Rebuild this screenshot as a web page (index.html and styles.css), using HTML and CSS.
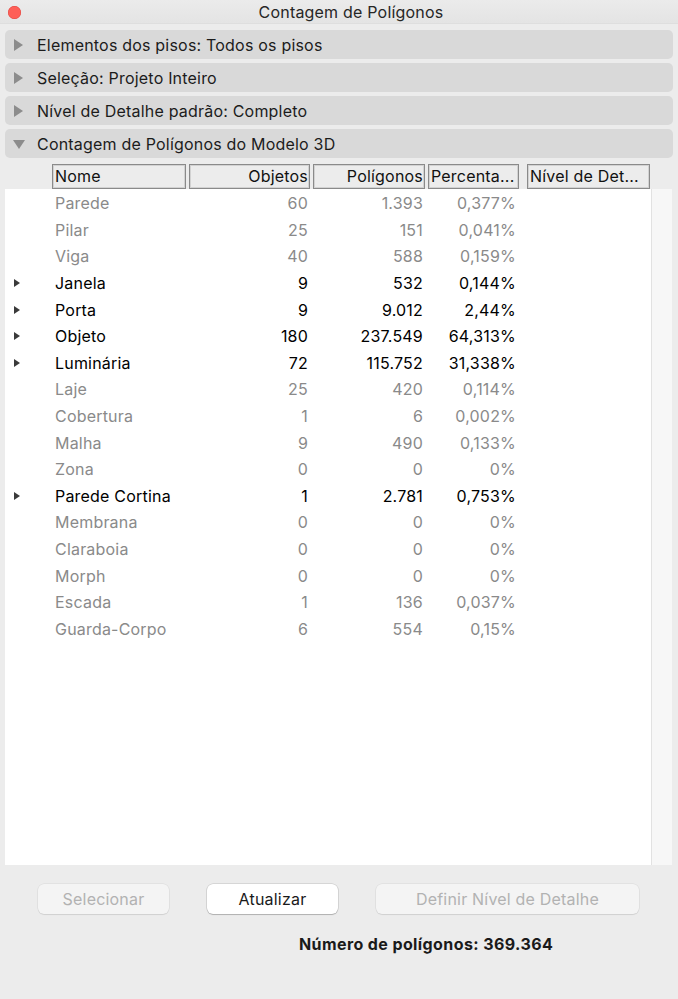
FILE: index.html
```html
<!DOCTYPE html>
<html lang="pt">
<head>
<meta charset="utf-8">
<title>Contagem de Polígonos</title>
<link rel="stylesheet" href="styles.css">
</head>
<body>
<div class="window">
  <div class="titlebar">
    <span class="close"></span>
    <span class="title">Contagem de Polígonos</span>
  </div>

  <div class="sections">
    <div class="bar"><span class="tri-right"></span><span>Elementos dos pisos: Todos os pisos</span></div>
    <div class="bar"><span class="tri-right"></span><span>Seleção: Projeto Inteiro</span></div>
    <div class="bar"><span class="tri-right"></span><span>Nível de Detalhe padrão: Completo</span></div>
    <div class="bar"><span class="tri-down"></span><span>Contagem de Polígonos do Modelo 3D</span></div>
  </div>

  <div class="table">
    <div class="thead">
      <div class="th left">Nome</div>
      <div class="th right">Objetos</div>
      <div class="th right">Polígonos</div>
      <div class="th left">Percenta...</div>
      <div class="th left last">Nível de Det...</div>
    </div>
    <div class="tbody">
      <div class="list">
        <div class="row dim"><span></span><span class="name">Parede</span><span class="num">60</span><span class="num">1.393</span><span class="pct">0,377%</span></div>
        <div class="row dim"><span></span><span class="name">Pilar</span><span class="num">25</span><span class="num">151</span><span class="pct">0,041%</span></div>
        <div class="row dim"><span></span><span class="name">Viga</span><span class="num">40</span><span class="num">588</span><span class="pct">0,159%</span></div>
        <div class="row"><span class="disc"></span><span class="name">Janela</span><span class="num">9</span><span class="num">532</span><span class="pct">0,144%</span></div>
        <div class="row"><span class="disc"></span><span class="name">Porta</span><span class="num">9</span><span class="num">9.012</span><span class="pct">2,44%</span></div>
        <div class="row"><span class="disc"></span><span class="name">Objeto</span><span class="num">180</span><span class="num">237.549</span><span class="pct">64,313%</span></div>
        <div class="row"><span class="disc"></span><span class="name">Luminária</span><span class="num">72</span><span class="num">115.752</span><span class="pct">31,338%</span></div>
        <div class="row dim"><span></span><span class="name">Laje</span><span class="num">25</span><span class="num">420</span><span class="pct">0,114%</span></div>
        <div class="row dim"><span></span><span class="name">Cobertura</span><span class="num">1</span><span class="num">6</span><span class="pct">0,002%</span></div>
        <div class="row dim"><span></span><span class="name">Malha</span><span class="num">9</span><span class="num">490</span><span class="pct">0,133%</span></div>
        <div class="row dim"><span></span><span class="name">Zona</span><span class="num">0</span><span class="num">0</span><span class="pct">0%</span></div>
        <div class="row"><span class="disc"></span><span class="name">Parede Cortina</span><span class="num">1</span><span class="num">2.781</span><span class="pct">0,753%</span></div>
        <div class="row dim"><span></span><span class="name">Membrana</span><span class="num">0</span><span class="num">0</span><span class="pct">0%</span></div>
        <div class="row dim"><span></span><span class="name">Claraboia</span><span class="num">0</span><span class="num">0</span><span class="pct">0%</span></div>
        <div class="row dim"><span></span><span class="name">Morph</span><span class="num">0</span><span class="num">0</span><span class="pct">0%</span></div>
        <div class="row dim"><span></span><span class="name">Escada</span><span class="num">1</span><span class="num">136</span><span class="pct">0,037%</span></div>
        <div class="row dim"><span></span><span class="name">Guarda-Corpo</span><span class="num">6</span><span class="num">554</span><span class="pct">0,15%</span></div>
      </div>
      <div class="scroll"></div>
    </div>
  </div>

  <div class="buttons">
    <button class="btn disabled b1">Selecionar</button>
    <button class="btn b2">Atualizar</button>
    <button class="btn disabled b3">Definir Nível de Detalhe</button>
  </div>

  <div class="total">Número de polígonos: 369.364</div>
</div>
</body>
</html>
```

FILE: styles.css
```css
* { box-sizing: border-box; }
html, body { margin: 0; padding: 0; }
body {
  width: 678px;
  height: 999px;
  background: #ececec;
  font-family: "Inter", "Liberation Sans", sans-serif;
  font-size: 16px;
  letter-spacing: 0.2px;
  color: #1a1a1a;
  overflow: hidden;
}
.window {
  display: flex;
  flex-direction: column;
  height: 999px;
  background: #ececec;
}
.titlebar {
  height: 24px;
  flex: none;
  display: flex;
  align-items: center;
  justify-content: center;
  position: relative;
  padding-left: 24px;
  background: linear-gradient(#ebebeb, #e4e4e4);
  border-bottom: 1px solid #dedede;
}
.close {
  position: absolute;
  left: 8px;
  top: 6px;
  width: 13px;
  height: 13px;
  border-radius: 50%;
  background: #fe5f57;
  box-shadow: inset 0 0 0 0.5px #e0443e;
}
.title {
  color: #262626;
}
.sections {
  display: flex;
  flex-direction: column;
  gap: 4px;
  padding: 6px 5px 0 5px;
}
.bar {
  height: 29px;
  border-radius: 5px;
  background: #d9d9d9;
  display: flex;
  align-items: center;
  padding-left: 9px;
  gap: 14px;
  color: #1c1c1c;
}
.tri-right {
  width: 0;
  height: 0;
  border-top: 6px solid transparent;
  border-bottom: 6px solid transparent;
  border-left: 9px solid #8c8c8c;
}
.tri-down {
  width: 0;
  height: 0;
  border-left: 6px solid transparent;
  border-right: 6px solid transparent;
  border-top: 9px solid #8c8c8c;
  margin-left: -1px;
  margin-right: -2px;
  margin-top: 1px;
}
.table {
  margin: 6px 6px 0 5px;
  display: flex;
  flex-direction: column;
}
.thead {
  display: grid;
  grid-template-columns: 134px 121px 112px 91px 128px;
  column-gap: 3px;
  padding-left: 47px;
  height: 25px;
}
.th {
  height: 25px;
  border: 1px solid #8a8a8a;
  box-shadow: inset 0 0 0 1px #d2d2d2;
  background: #ececec;
  color: #111;
  line-height: 23px;
  white-space: nowrap;
  overflow: hidden;
}
.th.left { padding-left: 2px; }
.th.right { text-align: right; padding-right: 1px; }
.th.last { margin-left: 5px; }
.tbody {
  display: flex;
  height: 676px;
}
.list {
  flex: 1;
  background: #fff;
  padding-top: 1px;
}
.scroll {
  width: 21px;
  background: #f7f7f7;
  border-left: 1px solid #e2e2e2;
}
.row {
  display: grid;
  grid-template-columns: 47px 137px 121px 115px 94px;
  height: 26.6px;
  align-items: center;
  color: #000;
}
.row.dim { color: #8a8a8a; }
.name { padding-left: 3px; white-space: nowrap; }
.num { text-align: right; padding-right: 2px; }
.pct { text-align: right; padding-right: 3px; }
.disc {
  width: 0;
  height: 0;
  margin-left: 9px;
  border-top: 4.5px solid transparent;
  border-bottom: 4.5px solid transparent;
  border-left: 6px solid #3a3a3a;
}
.buttons {
  display: flex;
  padding: 19px 0 0 38px;
}
.btn {
  font-family: inherit;
  font-size: 16px;
  letter-spacing: 0.2px;
  height: 30px;
  border-radius: 6px;
  border: none;
  background: #fff;
  color: #1a1a1a;
  box-shadow: 0 0 0 0.5px rgba(0,0,0,0.18), 0 1px 1px rgba(0,0,0,0.18);
  padding: 0;
}
.btn.disabled {
  background: #f4f4f4;
  color: #b2b2b2;
  box-shadow: 0 0 0 0.5px rgba(0,0,0,0.08), 0 1px 1px rgba(0,0,0,0.08);
}
.b1 { width: 131px; }
.b2 { width: 131px; margin-left: 38px; }
.b3 { width: 263px; margin-left: 38px; }
.total {
  padding-top: 20px;
  padding-left: 299px;
  font-weight: 700;
  letter-spacing: 0.4px;
  color: #1a1a1a;
}
```
